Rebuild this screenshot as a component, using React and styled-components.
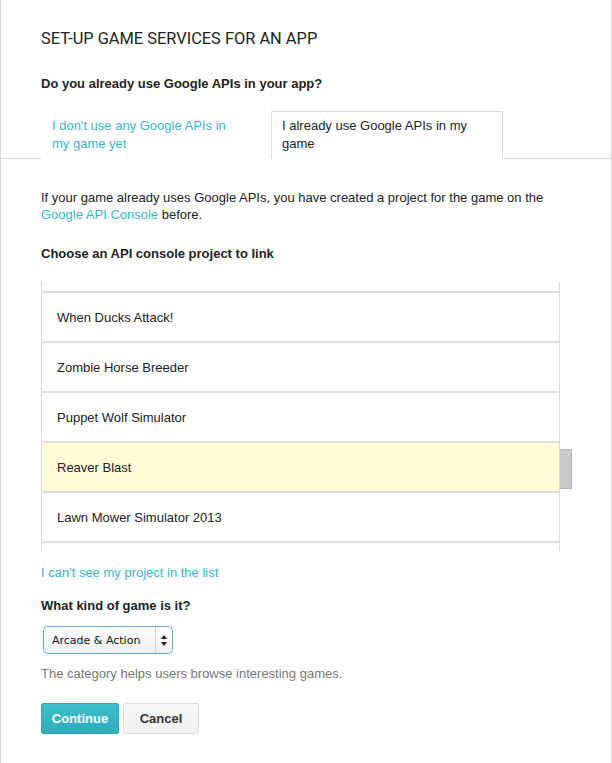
import React from "react";
import styled, { createGlobalStyle } from "styled-components";

const GlobalStyle = createGlobalStyle`
  body {
    margin: 0;
    background: #fff;
    font-family: "Liberation Sans", Arial, sans-serif;
    font-size: 13px;
    color: #222;
  }
`;

// first and last rows are only partly scrolled into view
const projects = [
  { id: 0, name: "" },
  { id: 1, name: "When Ducks Attack!" },
  { id: 2, name: "Zombie Horse Breeder" },
  { id: 3, name: "Puppet Wolf Simulator" },
  { id: 4, name: "Reaver Blast", selected: true },
  { id: 5, name: "Lawn Mower Simulator 2013" },
  { id: 6, name: "" },
];

const App = () => {
  return (
    <>
      <GlobalStyle />
      <Panel>
        <Header>
          <Title>SET-UP GAME SERVICES FOR AN APP</Title>
          <Question>Do you already use Google APIs in your app?</Question>
        </Header>
        <TabBar>
          <Tab>I don't use any Google APIs in my game yet</Tab>
          <Tab $active>I already use Google APIs in my game</Tab>
        </TabBar>
        <Body>
          <Paragraph>
            If your game already uses Google APIs, you have created a project
            for the game on the <Link>Google API Console</Link> before.
          </Paragraph>
          <Label>Choose an API console project to link</Label>
          <ListBox>
            <Viewport>
              <Rows>
                {projects.map((p) => (
                  <Row key={p.id} $selected={p.selected}>
                    {p.name}
                  </Row>
                ))}
              </Rows>
            </Viewport>
            <Track>
              <Thumb />
            </Track>
          </ListBox>
          <Link as="div" className="missing">
            I can't see my project in the list
          </Link>
          <Label className="kind">What kind of game is it?</Label>
          <Select>
            <SelectValue>Arcade &amp; Action</SelectValue>
            <SelectArrows>
              <svg width="6" height="11" viewBox="0 0 6 11">
                <path d="M3 0 L6 4 L0 4 Z" fill="#222" />
                <path d="M0 7 L6 7 L3 11 Z" fill="#222" />
              </svg>
            </SelectArrows>
          </Select>
          <Hint>The category helps users browse interesting games.</Hint>
          <Actions>
            <Button $primary>Continue</Button>
            <Button>Cancel</Button>
          </Actions>
        </Body>
      </Panel>
    </>
  );
};

const Panel = styled.div`
  box-sizing: border-box;
  width: 612px;
  min-height: 763px;
  border-left: 1px solid #d6d6d6;
  border-right: 1px solid #d6d6d6;
  background: #fff;
`;

const Header = styled.div`
  padding: 29px 40px 0;
`;

const Title = styled.h1`
  margin: 0;
  font-family: Roboto, "Liberation Sans", sans-serif;
  font-weight: 400;
  font-size: 16.4px;
  line-height: 20px;
  color: #222;
`;

const Question = styled.h2`
  margin: 26px 0 0;
  font-size: 13px;
  line-height: 18px;
  font-weight: 700;
  color: #222;
`;

const TabBar = styled.div`
  display: flex;
  margin-top: 18px;
  padding-left: 40px;
  border-bottom: 1px solid #dadada;
`;

const Tab = styled.div`
  box-sizing: border-box;
  width: ${(p) => (p.$active ? "232px" : "230px")};
  padding: 5px ${(p) => (p.$active ? "10px" : "40px")} 6px 10px;
  font-size: 13px;
  line-height: 18px;
  color: ${(p) => (p.$active ? "#222" : "#3ab6c6")};
  border: 1px solid ${(p) => (p.$active ? "#dadada" : "transparent")};
  border-bottom: none;
  background: #fff;
  margin-bottom: -1px;
`;

const Body = styled.div`
  padding: 30px 40px 0;
`;

const Paragraph = styled.p`
  margin: 0;
  line-height: 17px;
  color: #222;
`;

const Link = styled.a`
  color: #3ab6c6;
  text-decoration: none;
  &.missing {
    margin-top: 13px;
    line-height: 17px;
  }
`;

const Label = styled.div`
  margin-top: 22px;
  font-weight: 700;
  line-height: 17px;
  &.kind {
    margin-top: 16px;
  }
`;

const ListBox = styled.div`
  display: flex;
  width: 531px;
  height: 269px;
  margin-top: 20px;
`;

const Viewport = styled.div`
  box-sizing: border-box;
  width: 519px;
  height: 100%;
  overflow: hidden;
  border-left: 1px solid #dadada;
  border-right: 1px solid #dadada;
`;

const Rows = styled.div`
  margin-top: -39px;
`;

const Row = styled.div`
  display: flex;
  align-items: center;
  height: 48px;
  padding-left: 15px;
  border-bottom: 2px solid #dedede;
  background: ${(p) => (p.$selected ? "#fefdd6" : "#fff")};
  color: #222;
`;

const Track = styled.div`
  width: 12px;
`;

const Thumb = styled.div`
  box-sizing: border-box;
  width: 12px;
  height: 40px;
  margin-top: 167px;
  background: #c9c9c9;
  border: 1px solid #b4b4b4;
  border-left: none;
`;

const Select = styled.div`
  box-sizing: border-box;
  display: flex;
  width: 130px;
  height: 28px;
  margin: 12px 0 0 2px;
  border: 1px solid #6ea9dc;
  border-radius: 5px;
  background: linear-gradient(#ffffff, #eeeeee);
  box-shadow: 0 0 1px #8ec0ea;
  font-family: "DejaVu Sans", Verdana, sans-serif;
  font-size: 11px;
  color: #111;
`;

const SelectValue = styled.div`
  flex: 1;
  display: flex;
  align-items: center;
  padding-left: 8px;
`;

const SelectArrows = styled.div`
  width: 16px;
  display: flex;
  align-items: center;
  justify-content: center;
  border-left: 1px solid #d2d2d2;
`;

const Hint = styled.div`
  margin-top: 11px;
  line-height: 17px;
  color: #777;
`;

const Actions = styled.div`
  display: flex;
  gap: 4px;
  margin-top: 21px;
`;

const Button = styled.button`
  box-sizing: border-box;
  height: 31px;
  width: ${(p) => (p.$primary ? "78px" : "76px")};
  padding: 0;
  font-family: "Liberation Sans", Arial, sans-serif;
  font-size: 13px;
  font-weight: 700;
  border-radius: 2px;
  border: 1px solid ${(p) => (p.$primary ? "#2fa6b3" : "#dcdcdc")};
  color: ${(p) => (p.$primary ? "#fff" : "#333")};
  background: ${(p) =>
    p.$primary
      ? "linear-gradient(#3dc0cc, #30acb9)"
      : "linear-gradient(#f7f7f7, #f0f0f0)"};
`;

export default App;
